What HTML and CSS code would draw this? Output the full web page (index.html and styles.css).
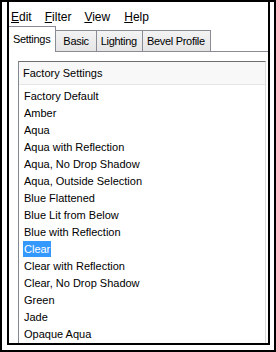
FILE: index.html
```html
<!DOCTYPE html>
<html lang="en">
<head>
    <meta charset="UTF-8">
    <title>Bevel Presets</title>
    <link rel="stylesheet" href="styles.css">
</head>
<body>
    <div class="frame">
        <div class="window">
            <div class="menu-bar">
                <span class="menu-item"><u>E</u>dit</span>
                <span class="menu-item"><u>F</u>ilter</span>
                <span class="menu-item"><u>V</u>iew</span>
                <span class="menu-item"><u>H</u>elp</span>
            </div>

            <div class="tabs">
                <div class="tab active">Settings</div>
                <div class="tab wide">Basic</div>
                <div class="tab">Lighting</div>
                <div class="tab">Bevel Profile</div>
            </div>

            <div class="tab-panel">
                <div class="list-box">
                    <div class="list-header">Factory Settings</div>
                    <ul class="list-items">
                        <li>Factory Default</li>
                        <li>Amber</li>
                        <li>Aqua</li>
                        <li>Aqua with Reflection</li>
                        <li>Aqua, No Drop Shadow</li>
                        <li>Aqua, Outside Selection</li>
                        <li>Blue Flattened</li>
                        <li>Blue Lit from Below</li>
                        <li>Blue with Reflection</li>
                        <li><span class="selected">Clear</span></li>
                        <li>Clear with Reflection</li>
                        <li>Clear, No Drop Shadow</li>
                        <li>Green</li>
                        <li>Jade</li>
                        <li>Opaque Aqua</li>
                    </ul>
                </div>
            </div>
        </div>
    </div>
</body>
</html>
```

FILE: styles.css
```css
body {
    margin: 0;
    font-family: "Liberation Sans", Arial, sans-serif;
    color: #000;
}
.frame {
    width: 276px;
    height: 352px;
    box-sizing: border-box;
    border: 2px solid #000;
    padding: 0 4px 5px 5px;
    background-color: #fff;
}
.window {
    height: 100%;
    box-sizing: border-box;
    border: 2px solid #000;
    border-top: none;
    display: flex;
    flex-direction: column;
    background-color: #fff;
}
.menu-bar {
    height: 24px;
    box-sizing: border-box;
    display: flex;
    align-items: center;
    padding: 6px 0 0 2px;
    font-size: 12px;
}
.menu-item {
    margin-right: 13px;
}
.menu-item:nth-child(3) {
    margin-right: 14px;
}
.tabs {
    height: 25px;
    display: flex;
    align-items: flex-end;
    font-size: 11px;
    letter-spacing: -0.3px;
}
.tab {
    height: 21px;
    line-height: 20px;
    box-sizing: border-box;
    padding: 0 5px 0 4px;
    border: 1px solid #898c95;
    border-bottom: none;
    border-left: none;
    background: linear-gradient(#f3f3f3, #e5e5e5);
}
.tab.wide {
    padding: 0 7px;
}
.tab.active {
    height: 26px;
    line-height: 25px;
    padding: 0 5px 0 4px;
    background: #fff;
    position: relative;
    top: 1px;
}
.tab-panel {
    flex: 1;
    border-top: 1px solid #898c95;
    padding: 9px 2px 0 9px;
    overflow: hidden;
}
.list-box {
    border: 1px solid #828790;
    border-top-color: #6e6e6e;
    border-right-color: #dcdcdc;
    height: 300px;
    font-size: 11px;
}
.list-header {
    height: 22px;
    line-height: 22px;
    padding-left: 4px;
    background-color: #f8f8f8;
    border-bottom: 1px solid #e5e5e5;
}
.list-items {
    list-style: none;
    margin: 0;
    padding: 3px 0 0 4px;
}
.list-items li {
    height: 17px;
    line-height: 17px;
}
.list-items li:not(:has(.selected)) {
    padding-left: 1px;
}
.selected {
    display: inline-block;
    height: 16px;
    line-height: 16px;
    padding: 0 1px;
    background-color: #3399ff;
    color: #fff;
}
```
